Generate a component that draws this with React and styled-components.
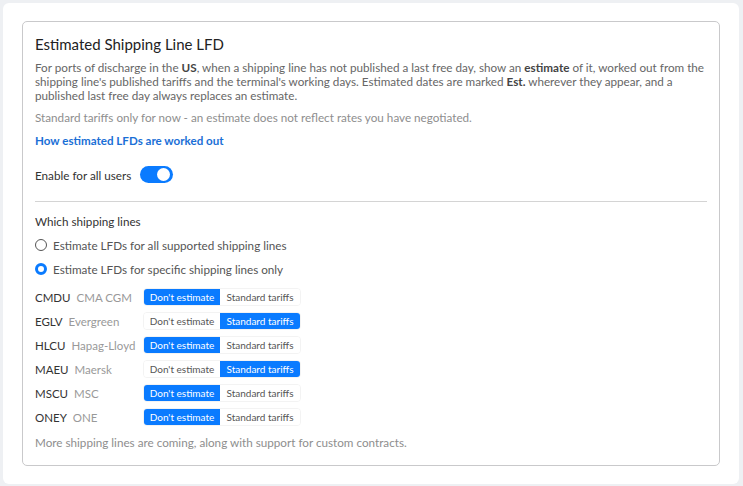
import React, { useState } from "react";
import styled, { createGlobalStyle } from "styled-components";

const GlobalStyle = createGlobalStyle`
  html, body {
    margin: 0;
    padding: 0;
    background: #eef0f3;
    font-family: Lato, "Open Sans", sans-serif;
  }
`;

const Page = styled.div`
  padding: 3px 4px 2px 3px;
  height: 486px;
  box-sizing: border-box;
`;

const Card = styled.div`
  background: #ffffff;
  border-radius: 6px;
  height: 100%;
  box-sizing: border-box;
  padding: 18px 19px 18px 19px;
`;

const Panel = styled.section`
  border: 1px solid #c9c9cb;
  border-radius: 5px;
  height: 100%;
  box-sizing: border-box;
  padding: 13px 12px 0 12px;
`;

const Title = styled.h2`
  margin: 0 0 6px 0;
  font-size: 15px;
  font-weight: 400;
  color: #222;
  line-height: 19px;
`;

const Text = styled.p`
  margin: 0 0 ${p => p.$mb || 8}px 0;
  font-size: 11.7px;
  line-height: 14px;
  color: ${p => (p.$muted ? "#8e8e8e" : "#666")};
  b {
    font-weight: 700;
    color: #444;
  }
`;

const Link = styled.a`
  display: block;
  font-size: 11.6px;
  font-weight: 700;
  color: #1a6fd6;
  text-decoration: none;
  line-height: 14px;
  margin: 0 0 18px 0;
`;

const ToggleRow = styled.div`
  display: flex;
  align-items: center;
  gap: 9px;
  font-size: 11.7px;
  color: #333;
  padding-bottom: 18px;
  border-bottom: 1px solid #d4d4d4;
  margin-bottom: 12px;
`;

const Toggle = styled.button`
  width: 33px;
  height: 17px;
  border-radius: 9px;
  border: none;
  padding: 0;
  background: ${p => (p.$on ? "#0a7bff" : "#c8c8c8")};
  position: relative;
  cursor: pointer;
  &::after {
    content: "";
    position: absolute;
    top: 2px;
    left: ${p => (p.$on ? "17px" : "2px")};
    width: 13px;
    height: 13px;
    border-radius: 50%;
    background: #fff;
  }
`;

const Label = styled.div`
  font-size: 11.7px;
  color: #333;
  line-height: 14px;
  margin-bottom: 10px;
`;

const RadioRow = styled.label`
  display: flex;
  align-items: center;
  gap: 6px;
  font-size: 11.7px;
  color: #555;
  line-height: 14px;
  margin-bottom: 10px;
  cursor: pointer;
`;

const RadioDot = styled.span`
  width: ${p => (p.$checked ? 6 : 10)}px;
  height: ${p => (p.$checked ? 6 : 10)}px;
  border-radius: 50%;
  border: ${p => (p.$checked ? "3.5px solid #0a7bff" : "1px solid #555")};
  background: #fff;
  flex: none;
`;

const Lines = styled.div`
  display: flex;
  flex-direction: column;
  gap: 8px;
  margin-top: 13px;
  margin-bottom: 10px;
`;

const LineRow = styled.div`
  display: flex;
  align-items: center;
  height: 16px;
`;

const LineName = styled.div`
  width: 108px;
  font-size: 11.5px;
  color: #333;
  span {
    color: #999;
    margin-left: 6px;
  }
`;

const Segmented = styled.div`
  display: flex;
  border: 1px solid #f3f3f3;
  border-radius: 4px;
  height: 16px;
`;

const Segment = styled.button`
  border: none;
  margin: 0;
  padding: 0;
  width: ${p => p.$w}px;
  height: 16px;
  font-family: inherit;
  font-size: 10px;
  border-radius: ${p => (p.$first ? "3px 0 0 3px" : "0 3px 3px 0")};
  background: ${p => (p.$active ? "#0a7bff" : "#fff")};
  color: ${p => (p.$active ? "#fff" : "#555")};
  cursor: pointer;
`;

const lines = [
  { code: "CMDU", name: "CMA CGM", mode: "none" },
  { code: "EGLV", name: "Evergreen", mode: "std" },
  { code: "HLCU", name: "Hapag-Lloyd", mode: "none" },
  { code: "MAEU", name: "Maersk", mode: "std" },
  { code: "MSCU", name: "MSC", mode: "none" },
  { code: "ONEY", name: "ONE", mode: "none" },
];

export default function App() {
  const [enabled, setEnabled] = useState(true);
  const [scope, setScope] = useState("specific");
  const [modes, setModes] = useState(lines.map(l => l.mode));

  const setMode = (i, m) => setModes(ms => ms.map((x, j) => (j === i ? m : x)));

  return (
    <Page>
      <GlobalStyle />
      <Card>
        <Panel>
          <Title>Estimated Shipping Line LFD</Title>
          <Text>
            For ports of discharge in the <b>US</b>, when a shipping line has not published a last free day, show an{" "}
            <b>estimate</b> of it, worked out from the shipping line's published tariffs and the terminal's working
            days. Estimated dates are marked <b>Est.</b> wherever they appear, and a published last free day always
            replaces an estimate.
          </Text>
          <Text $muted $mb={10}>
            Standard tariffs only for now - an estimate does not reflect rates you have negotiated.
          </Text>
          <Link href="#">How estimated LFDs are worked out</Link>
          <ToggleRow>
            Enable for all users
            <Toggle $on={enabled} onClick={() => setEnabled(!enabled)} aria-label="Enable for all users" />
          </ToggleRow>
          <Label>Which shipping lines</Label>
          <RadioRow onClick={() => setScope("all")}>
            <RadioDot $checked={scope === "all"} />
            Estimate LFDs for all supported shipping lines
          </RadioRow>
          <RadioRow onClick={() => setScope("specific")}>
            <RadioDot $checked={scope === "specific"} />
            Estimate LFDs for specific shipping lines only
          </RadioRow>
          <Lines>
            {lines.map((l, i) => (
              <LineRow key={l.code}>
                <LineName>
                  {l.code}
                  <span>{l.name}</span>
                </LineName>
                <Segmented>
                  <Segment $first $w={76} $active={modes[i] === "none"} onClick={() => setMode(i, "none")}>
                    Don't estimate
                  </Segment>
                  <Segment $w={80} $active={modes[i] === "std"} onClick={() => setMode(i, "std")}>
                    Standard tariffs
                  </Segment>
                </Segmented>
              </LineRow>
            ))}
          </Lines>
          <Text $muted>More shipping lines are coming, along with support for custom contracts.</Text>
        </Panel>
      </Card>
    </Page>
  );
}
